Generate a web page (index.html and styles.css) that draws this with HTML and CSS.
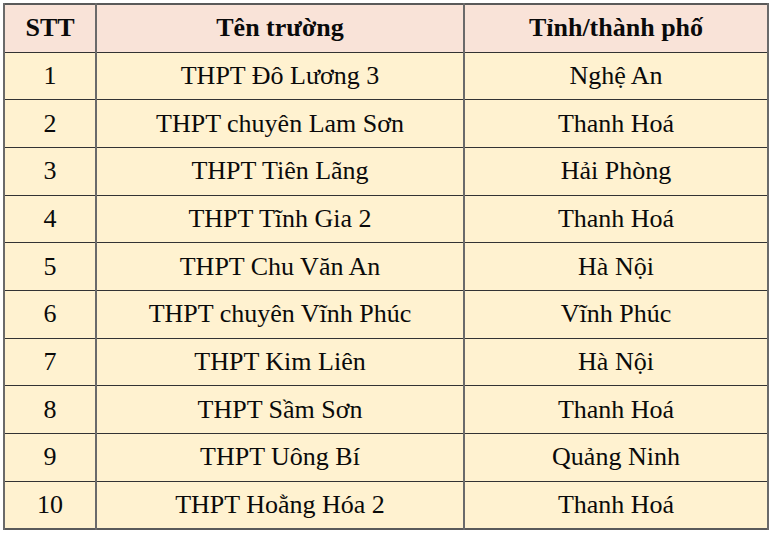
FILE: index.html
```html
<!DOCTYPE html>
<html lang="vi">
<head>
<meta charset="utf-8">
<link rel="stylesheet" href="styles.css">
</head>
<body>
<table class="list">
  <colgroup>
    <col class="c1"><col class="c2"><col class="c3">
  </colgroup>
  <thead>
    <tr><th>STT</th><th>Tên trường</th><th>Tỉnh/thành phố</th></tr>
  </thead>
  <tbody>
    <tr><td>1</td><td>THPT Đô Lương 3</td><td>Nghệ An</td></tr>
    <tr><td>2</td><td>THPT chuyên Lam Sơn</td><td>Thanh Hoá</td></tr>
    <tr><td>3</td><td>THPT Tiên Lãng</td><td>Hải Phòng</td></tr>
    <tr><td>4</td><td>THPT Tĩnh Gia 2</td><td>Thanh Hoá</td></tr>
    <tr><td>5</td><td>THPT Chu Văn An</td><td>Hà Nội</td></tr>
    <tr><td>6</td><td>THPT chuyên Vĩnh Phúc</td><td>Vĩnh Phúc</td></tr>
    <tr><td>7</td><td>THPT Kim Liên</td><td>Hà Nội</td></tr>
    <tr><td>8</td><td>THPT Sầm Sơn</td><td>Thanh Hoá</td></tr>
    <tr><td>9</td><td>THPT Uông Bí</td><td>Quảng Ninh</td></tr>
    <tr><td>10</td><td>THPT Hoằng Hóa 2</td><td>Thanh Hoá</td></tr>
  </tbody>
</table>
</body>
</html>
```
FILE: styles.css
```css
html, body {
  margin: 0;
  padding: 0;
  background: #ffffff;
}
body {
  padding: 3px 0 0 3px;
  font-family: "Liberation Serif", "Times New Roman", serif;
  color: #0a0a0a;
}
.list {
  border-collapse: collapse;
  table-layout: fixed;
  width: 764px;
  border: 2px solid #5a5a5a;
}
.c1 { width: 92px; }
.c2 { width: 368px; }
.c3 { width: 304px; }
.list th, .list td {
  text-align: center;
  vertical-align: middle;
  padding: 0;
  font-size: 26px;
  line-height: 30px;
  border-top: 1px solid #333333;
  border-bottom: 1px solid #333333;
  border-left: 2px solid #6a6a6a;
  border-right: 2px solid #6a6a6a;
}
.list thead tr {
  height: 48px;
  background: #f9e3d8;
}
.list th {
  font-weight: bold;
}
.list tbody tr {
  height: 47.7px;
  background: #fff2d0;
}
```
